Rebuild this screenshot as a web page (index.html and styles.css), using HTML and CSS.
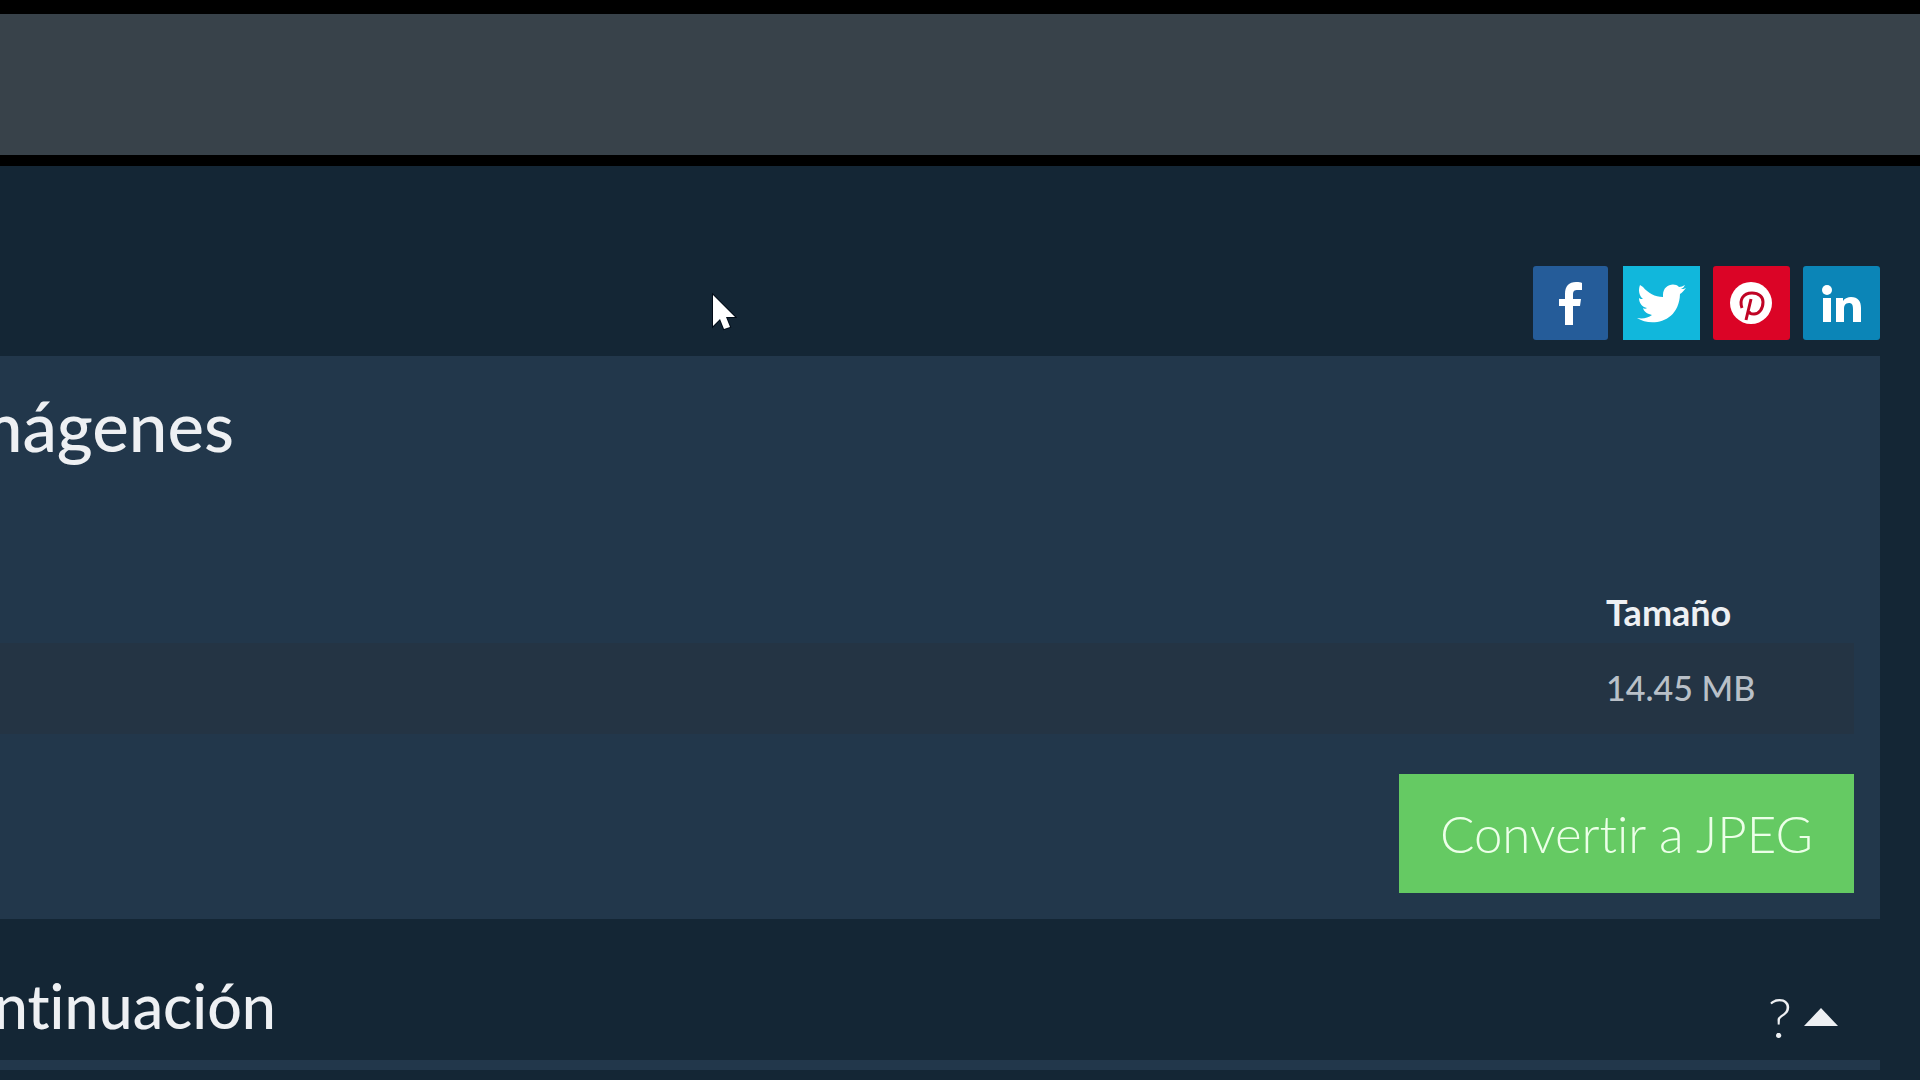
FILE: index.html
```
<!doctype html>
<html lang="es">
<head>
  <meta charset="UTF-8">
  <title>Convertir a JPEG</title>
  <meta name="viewport" content="width=device-width, initial-scale=1.0">
  <link rel="stylesheet" href="styles.css">
</head>
<body>
  <div class="topbar"></div>

  <main class="page">
    <nav class="share" aria-label="Compartir">
      <a class="facebook" href="#" aria-label="Facebook">
        <svg viewBox="0 0 75 74"><path d="M32 59V40h-6v-7h6v-5c0-8 4-12 11-12 3 0 5 0 6 1v7h-4c-4 0-5 1-5 5v4h8l-1 7h-7v19z"/></svg>
      </a>
      <a class="twitter" href="#" aria-label="Twitter">
        <svg viewBox="0 0 77 74"><path d="M63 22c-2 1-3 1-5 1 2-1 3-2 4-4-2 1-4 2-6 2-5-5-16-2-16 8v2c-8 0-15-4-20-10l-3-2c-2 5-1 11 3 14-2 0-3 0-4-1 0 5 3 9 8 10-1 1-3 1-4 0 1 4 5 6 9 7-4 3-9 4-15 3 14 9 42 5 43-24 2-1 4-4 6-6z"/></svg>
      </a>
      <a class="pinterest" href="#" aria-label="Pinterest">
        <svg viewBox="0 0 77 74"><circle cx="38" cy="37" r="21"/><path class="mark" d="M29 42c-3-8 1-15 10-15 7 0 11 4 11 9 0 7-4 12-9 12-3 0-5-1-5-3M38 33l-5 21"/></svg>
      </a>
      <a class="linkedin" href="#" aria-label="LinkedIn">
        <svg viewBox="0 0 77 74"><circle cx="24" cy="24" r="5"/><path d="M20 32h8v24h-8zM33 32h7v3c2-3 5-4 8-4 7 0 10 4 10 11v14h-8V43c0-4-1-6-4-6-4 0-5 3-5 6v13h-8z"/></svg>
      </a>
    </nav>

    <section class="panel">
      <h1><span>mágenes</span></h1>
      <table class="files">
        <thead>
          <tr><td></td><th class="size" scope="col">Tamaño</th></tr>
        </thead>
        <tbody>
          <tr><td></td><td class="size">14.45 MB</td></tr>
        </tbody>
      </table>
      <button class="convert" type="button">Convertir a JPEG</button>
    </section>

    <section class="more">
      <h2><span>ntinuación</span></h2>
      <div class="tools">
        <a href="#" aria-label="Ayuda">?</a>
        <button type="button" aria-label="Contraer"><svg viewBox="0 0 34 18"><path d="M17 0l17 18H0z"/></svg></button>
      </div>
    </section>
  </main>

  <svg class="cursor" viewBox="0 0 26 38"><path d="M2 2v31l7-7 4 10 6-2-4-10h9z"/></svg>
</body>
</html>
```

FILE: styles.css
```
* {
  box-sizing: border-box;
}

body {
  margin: 0;
  background: #142635;
  color: #eef0f3;
  font-family: Lato, sans-serif;
  font-variant-ligatures: none;
  overflow: hidden;
}

.topbar {
  height: 166px;
  background: #38424a;
  border-top: 14px solid #000;
  border-bottom: 11px solid #000;
}

.page {
  padding: 100px 40px 0 0;
}

.share {
  display: flex;
  justify-content: flex-end;
  gap: 13px;
  margin-bottom: 16px;
}

.share a {
  width: 77px;
  height: 74px;
  border-radius: 3px;
}

.share svg {
  display: block;
  fill: #fff;
}

.share .facebook {
  width: 75px;
  margin-right: 2px;
  background: #255c99;
}

.share .twitter {
  background: #11b7dc;
  border-radius: 0;
}

.pinterest { background: #db0426; }
.linkedin { background: #0b85b7; }

.pinterest .mark {
  fill: none;
  stroke: #c00425;
  stroke-width: 3;
}

.panel {
  display: flex;
  flex-direction: column;
  padding: 30px 26px 26px 0;
  background: #22374b;
}

/* titles run off the left edge of the window */
h1, h2 {
  display: flex;
  justify-content: flex-end;
  margin: 0;
  font-weight: 500;
}

h1 {
  width: 234px;
  font-size: 69px;
  line-height: 80px;
}

.files {
  width: 100%;
  margin-top: 116px;
  border-collapse: collapse;
  font-size: 36px;
  line-height: 44px;
}

.files th, .files td {
  height: 61px;
  padding: 0 0 2px;
  text-align: left;
}

.files tbody td {
  height: 91px;
  background: #243444;
  color: #b9c0c8;
}

.files .size {
  width: 248px;
}

.files td.size {
  font-size: 34px;
  font-weight: 500;
}

.convert {
  align-self: flex-end;
  height: 119px;
  margin-top: 40px;
  padding: 0 41px;
  border: 0;
  background: #65ca63;
  color: #ecffe8;
  font-family: inherit;
  font-variant-ligatures: inherit;
  font-size: 51px;
  font-weight: 300;
}

.more {
  display: flex;
  justify-content: space-between;
  align-items: center;
  padding: 32px 42px 0 0;
  height: 151px;
  border-bottom: 10px solid #22374b;
}

h2 {
  width: 276px;
  font-size: 61px;
  line-height: 72px;
}

.tools {
  display: flex;
  align-items: center;
  gap: 12px;
  padding-top: 22px;
}

.tools a {
  color: inherit;
  font-size: 56px;
  font-weight: 300;
  text-decoration: none;
}

.tools button {
  padding: 0;
  border: 0;
  background: none;
}

.tools svg {
  display: block;
  width: 34px;
  height: 18px;
  fill: #eef0f3;
}

.cursor {
  position: absolute;
  left: 711px;
  top: 293px;
  width: 26px;
  height: 38px;
  fill: #fff;
  stroke: #020c18;
  stroke-width: 2;
  paint-order: stroke;
}
```
